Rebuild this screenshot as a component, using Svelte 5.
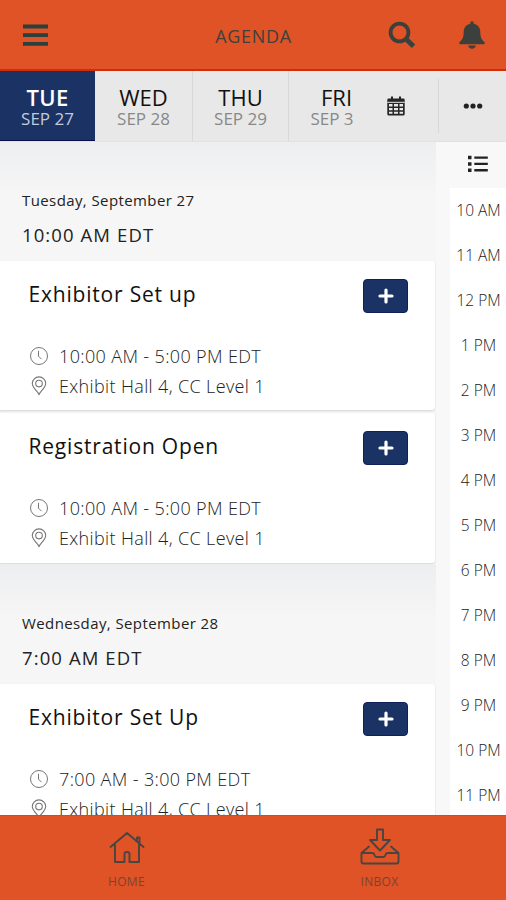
<script lang="ts">
  type Session = { title: string; time: string; place: string };
  type Block = { date: string; start: string; sessions: Session[] };

  const days = [
    { name: 'TUE', date: 'SEP 27' },
    { name: 'WED', date: 'SEP 28' },
    { name: 'THU', date: 'SEP 29' },
    { name: 'FRI', date: 'SEP 3' }
  ];

  const place = 'Exhibit Hall 4, CC Level 1';

  const blocks: Block[] = [
    {
      date: 'Tuesday, September 27',
      start: '10:00 AM EDT',
      sessions: [
        { title: 'Exhibitor Set up', time: '10:00 AM - 5:00 PM EDT', place },
        { title: 'Registration Open', time: '10:00 AM - 5:00 PM EDT', place }
      ]
    },
    {
      date: 'Wednesday, September 28',
      start: '7:00 AM EDT',
      sessions: [{ title: 'Exhibitor Set Up', time: '7:00 AM - 3:00 PM EDT', place }]
    }
  ];

  const hours = [
    '10 AM', '11 AM', '12 PM', '1 PM', '2 PM', '3 PM', '4 PM',
    '5 PM', '6 PM', '7 PM', '8 PM', '9 PM', '10 PM', '11 PM'
  ];

  let selected = $state(0);
</script>

<div class="app">
  <header class="topbar">
    <button class="icon-btn menu" aria-label="Menu">
      <svg width="26" height="22" viewBox="0 0 26 22"><path d="M0 2.5h25M0 11.2h25M0 19.8h25" stroke="#29403c" stroke-width="3.8" /></svg>
    </button>
    <h1>AGENDA</h1>
    <div class="actions">
      <button class="icon-btn" aria-label="Search">
        <svg width="28" height="28" viewBox="0 0 28 28" fill="none" stroke="#3b403c">
          <circle cx="11.5" cy="11.5" r="8.9" stroke-width="3.8" />
          <path d="M18.5 18.5l7 6.8" stroke-width="4.8" />
        </svg>
      </button>
      <button class="icon-btn" aria-label="Notifications">
        <svg width="26" height="28" viewBox="0 0 26 28" fill="#3b403c">
          <path d="M13 .3c-1 0-1.7.7-1.7 1.7v.8C7.3 3.6 4.7 6.7 4.7 11c0 5.5-1.7 7.8-3.6 9.6-.6.6-.9 1.1-.9 1.6 0 .7.5 1 1.2 1h23.2c.7 0 1.2-.3 1.2-1 0-.5-.3-1-.9-1.6-1.9-1.8-3.6-4.1-3.6-9.6 0-4.3-2.6-7.4-6.6-8.2V2c0-1-.7-1.7-1.7-1.7z" />
          <path d="M9.3 24.6h7.4c0 1.9-1.6 3.2-3.7 3.2s-3.7-1.3-3.7-3.2z" />
        </svg>
      </button>
    </div>
  </header>

  <nav class="days">
    {#each days as day, i}
      <button class="day" class:active={selected === i} onclick={() => (selected = i)}>
        <span class="day-name">{day.name}</span>
        <span class="day-date">{day.date}</span>
      </button>
    {/each}
    <button class="calendar" aria-label="Calendar">
      <svg width="18" height="20" viewBox="0 0 18 20">
        <path fill="#252525" fill-rule="evenodd" d="M4 .5h2v2h6v-2h2v2h2.3q1.4 0 1.4 1.4V18q0 1.500-1.400 1.500H1.700Q.3 19.500.3 18V3.900Q.3 2.500 1.700 2.500H4zM2 8v2.500h3.500V8zm5 0v2.500h4V8zm5.500 0v2.500H16V8zM2 12v2.300h3.500V12zm5 0v2.300h4V12zm5.500 0v2.300H16V12zM2 15.800v2h3.500v-2zm5 0v2h4v-2zm5.500 0v2H16v-2z" />
        <path d="M0.3 6.3h17.4" stroke="#e8e8e8" stroke-width="1" />
      </svg>
    </button>
    <button class="more" aria-label="More">
      <svg width="20" height="6" viewBox="0 0 20 6" fill="#222">
        <circle cx="3.3" cy="3" r="2.6" /><circle cx="10" cy="3" r="2.6" /><circle cx="16.7" cy="3" r="2.6" />
      </svg>
    </button>
  </nav>

  <div class="content">
    <main class="agenda">
      {#each blocks as block}
        <section>
          <div class="block-head">
            <div class="block-date">{block.date}</div>
            <div class="block-start">{block.start}</div>
          </div>
          <div class="cards">
            {#each block.sessions as session}
              <article class="card">
                <div class="card-top">
                  <h2>{session.title}</h2>
                  <button class="add" aria-label="Add">
                    <svg width="16" height="16" viewBox="0 0 16 16"><path d="M8 2v12M2 8h12" stroke="#fff" stroke-width="3.2" stroke-linecap="round" /></svg>
                  </button>
                </div>
                <div class="detail">
                  <svg width="20" height="20" viewBox="0 0 20 20" fill="none" stroke="#777">
                    <circle cx="10" cy="10" r="8.5" />
                    <path d="M9.5 4.8v5.4l3 3" />
                  </svg>
                  <span>{session.time}</span>
                </div>
                <div class="detail">
                  <svg width="20" height="20" viewBox="0 0 20 20" fill="none" stroke="#777" stroke-width="1.1">
                    <path d="M10 18.5C8.5 15.3 3.3 11.5 3.3 7.4a6.7 6.5 0 0 1 13.4 0c0 4.1-5.2 7.9-6.7 11.1z" />
                    <circle cx="10" cy="7.6" r="3.3" />
                  </svg>
                  <span>{session.place}</span>
                </div>
              </article>
            {/each}
          </div>
        </section>
      {/each}
    </main>

    <aside class="side">
      <button class="list-btn" aria-label="List view">
        <svg width="20" height="18" viewBox="0 0 20 18" fill="#222">
          <path d="M0 .8h3.500v3.500H0zM0 7.200h3.500v3.500H0zM0 13.500h3.500V17H0zM6.300 1.400h13.500v2.300H6.300zM6.300 7.800h13.500v2.300H6.300zM6.300 14.100h13.500v2.300H6.300z" />
        </svg>
      </button>
      <ul class="hours">
        {#each hours as hour}
          <li>{hour}</li>
        {/each}
      </ul>
    </aside>
  </div>

  <footer class="tabbar">
    <button class="tab">
      <svg width="36" height="34" viewBox="0 0 36 34" fill="none" stroke="#4a4540" stroke-width="1.9" stroke-linejoin="round" stroke-linecap="round">
        <path d="M1.5 15L18 1l16.500 14M6 12.500V30h9.500V22q0-2 2.500-2t2.500 2v8H30V12.500M28 9V5.500h2.500V11" />
      </svg>
      <span>HOME</span>
    </button>
    <button class="tab">
      <svg width="40" height="38" viewBox="0 0 40 38" fill="none" stroke="#4a4540" stroke-width="1.9" stroke-linejoin="round" stroke-linecap="round">
        <path d="M17 1.500h6v10.500h7L20 22.500 10 12h7z" />
        <path d="M9 18.500L1.500 25v8.500q0 2 2 2h33q2 0 2-2V25L31 18.500M1.500 25H12q2 0 2.500 2t2 2h7q1.500 0 2-2t2.500-2h10.500" />
      </svg>
      <span>INBOX</span>
    </button>
  </footer>
</div>

<style>
  :global(body) {
    margin: 0;
  }

  .app {
    display: flex;
    flex-direction: column;
    width: 506px;
    height: 900px;
    overflow: hidden;
    background: #f6f6f6;
    color: #222;
    font-family: 'Open Sans', 'Noto Sans', sans-serif;
  }

  button {
    padding: 0;
    border: none;
    background: none;
    color: inherit;
    font: inherit;
    cursor: pointer;
  }

  svg {
    display: block;
    flex: none;
  }

  h1,
  h2,
  ul {
    margin: 0;
    padding: 0;
  }

  .topbar {
    display: grid;
    grid-template-columns: 1fr auto 1fr;
    align-items: center;
    flex: none;
    height: 71px;
    box-sizing: border-box;
    padding: 0 21px 0 23px;
    border-bottom: 2px solid #d22c0e;
    background: #df5326;
  }

  .icon-btn.menu {
    justify-self: start;
  }

  h1 {
    color: #42403a;
    font-size: 18px;
    font-weight: 500;
    line-height: 24px;
    letter-spacing: 0.7px;
    padding: 2px 1px 0 0;
  }

  .actions {
    display: flex;
    justify-content: flex-end;
    gap: 43px;
  }

  .days {
    display: flex;
    flex: none;
    height: 71px;
    box-sizing: border-box;
    border-bottom: 1px solid #e2e2e2;
    background: #e8e8e8;
  }

  .day {
    display: flex;
    flex-direction: column;
    align-items: center;
    width: 96px;
    box-sizing: border-box;
    padding-top: 13px;
    border-right: 1px solid #d8d8d8;
  }

  .day:nth-child(4) {
    width: 86px;
    border-right: none;
  }

  .day:nth-child(4) .day-name {
    padding-left: 9px;
  }

  .day:first-child {
    width: 95px;
    border-right: none;
  }

  .day:nth-child(2) {
    width: 98px;
  }

  .day-name {
    color: #111;
    font-size: 22px;
    font-weight: 500;
    line-height: 26px;
  }

  .day-date {
    color: #888;
    font-size: 17px;
    line-height: 18px;
  }

  .day.active {
    background: #1b3264;
    color: #fff;
    box-shadow: inset 0 -1px #0b0f50;
  }

  .active .day-name {
    color: #fff;
    font-weight: 600;
    letter-spacing: 0.3px;
  }

  .active .day-date {
    color: #c3cad9;
  }

  .calendar {
    display: flex;
    align-items: center;
    justify-content: center;
    width: 41px;
    margin-right: 22px;
  }

  .more {
    display: flex;
    align-items: center;
    justify-content: center;
    flex: 1;
    margin: 8px 0;
    border-left: 1px solid #d8d8d8;
  }

  .content {
    display: flex;
    flex: 1;
    min-height: 0;
    overflow: hidden;
  }

  .agenda {
    width: 436px;
  }

  .block-head {
    height: 119px;
    box-sizing: border-box;
    padding: 48px 22px 0;
    background: linear-gradient(#edeef0, #f6f6f6 45%);
  }

  .block-date {
    font-size: 15px;
    line-height: 20px;
    letter-spacing: 0.4px;
  }

  .block-start {
    margin-top: 13px;
    font-size: 18.5px;
    line-height: 24px;
    letter-spacing: 1.1px;
  }

  .cards {
    display: flex;
    flex-direction: column;
    gap: 3px;
    padding-bottom: 2px;
  }

  .card {
    width: 435px;
    height: 149px;
    box-sizing: border-box;
    padding: 18px 27px 0 28.5px;
    border-radius: 0 3px 3px 0;
    background: #fff;
    box-shadow: 0 1px 2px #d4d4d4;
  }

  .card:last-child {
    height: 150px;
  }

  .card-top {
    display: flex;
    align-items: flex-start;
    justify-content: space-between;
    height: 62.5px;
  }

  h2 {
    color: #111;
    font-size: 21px;
    font-weight: 400;
    line-height: 30px;
    letter-spacing: 0.8px;
  }

  .add {
    display: flex;
    align-items: center;
    justify-content: center;
    width: 45px;
    height: 34px;
    box-sizing: border-box;
    border: 1px solid #10205a;
    border-radius: 4px;
    background: #1b3264;
  }

  .detail {
    display: flex;
    align-items: center;
    gap: 10.5px;
    height: 29.5px;
    color: #222;
    font-size: 18px;
    font-weight: 300;
    letter-spacing: 0.36px;
    white-space: nowrap;
  }

  .side {
    display: flex;
    flex-direction: column;
    width: 70px;
    background: #f8f8f8;
  }

  .list-btn {
    display: flex;
    align-items: center;
    justify-content: center;
    flex: none;
    height: 46px;
    padding: 0 0 2px 14px;
    box-sizing: border-box;
  }

  .hours {
    margin-left: 14px;
    padding-left: 1px;
    background: #fff;
    list-style: none;
    color: #222;
    font-size: 15.5px;
    font-weight: 300;
  }

  .hours li {
    height: 45px;
    line-height: 45px;
    text-align: center;
    white-space: nowrap;
  }

  .tabbar {
    display: flex;
    flex: none;
    height: 85px;
    box-sizing: border-box;
    border-top: 1px solid #a85a3c;
    background: #df5326;
  }

  .tab {
    display: flex;
    flex-direction: column;
    align-items: center;
    justify-content: flex-end;
    flex: 1;
    gap: 8px;
    padding-bottom: 10px;
    color: #7d422f;
    font-size: 12px;
    line-height: 16px;
    letter-spacing: 0.3px;
  }
</style>
